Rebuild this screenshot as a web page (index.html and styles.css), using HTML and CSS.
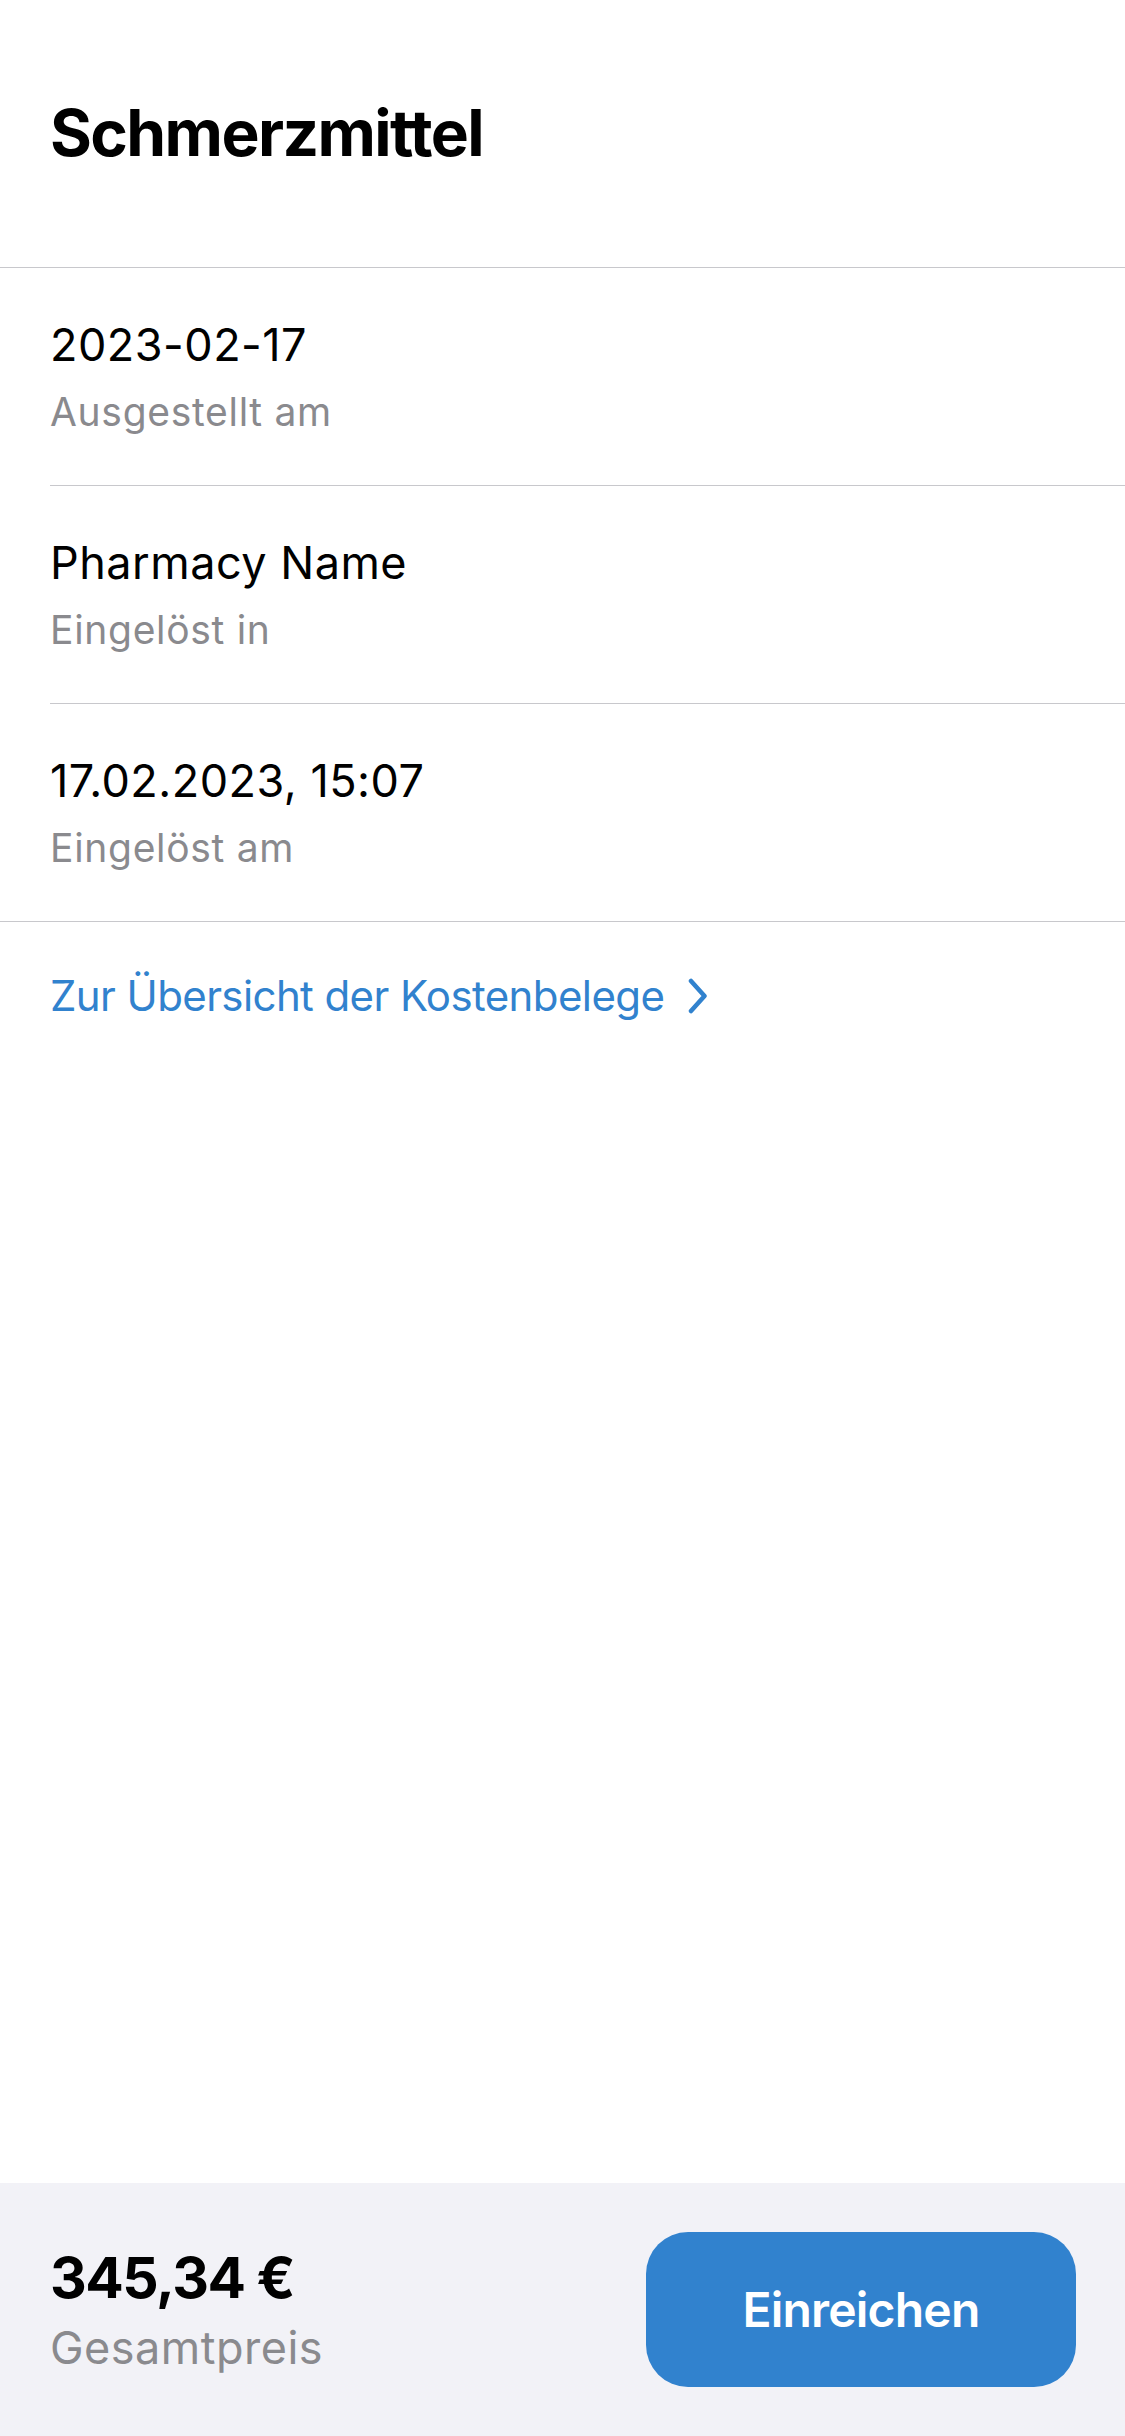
FILE: index.html
```html
<!DOCTYPE html>
<html lang="de">
<head>
<meta charset="utf-8">
<title>Schmerzmittel</title>
<link rel="stylesheet" href="styles.css">
</head>
<body>
<div class="screen">
  <header class="header">
    <h1 class="title">Schmerzmittel</h1>
  </header>
  <section class="list">
    <div class="row">
      <div class="primary">2023-02-17</div>
      <div class="secondary">Ausgestellt am</div>
    </div>
    <div class="row">
      <div class="primary">Pharmacy Name</div>
      <div class="secondary">Eingelöst in</div>
    </div>
    <div class="row last">
      <div class="primary">17.02.2023, 15:07</div>
      <div class="secondary">Eingelöst am</div>
    </div>
  </section>
  <a class="link" href="#">
    <span>Zur Übersicht der Kostenbelege</span>
    <svg class="chevron" width="22" height="36" viewBox="0 0 22 36" aria-hidden="true">
      <path d="M4 3 L17.5 18 L4 33" fill="none" stroke="currentColor" stroke-width="4.5" stroke-linecap="round" stroke-linejoin="round"/>
    </svg>
  </a>
  <main class="spacer"></main>
  <footer class="footer">
    <div class="total">
      <div class="price">345,34 €</div>
      <div class="price-label">Gesamtpreis</div>
    </div>
    <button class="submit" type="button">Einreichen</button>
  </footer>
</div>
</body>
</html>
```

FILE: styles.css
```css
html, body {
  margin: 0;
  padding: 0;
  background: #ffffff;
}

body {
  font-family: Inter, "Noto Sans", "Liberation Sans", sans-serif;
  color: #000000;
  -webkit-font-smoothing: antialiased;
}

.screen {
  width: 1125px;
  height: 2436px;
  display: flex;
  flex-direction: column;
  overflow: hidden;
}

.header {
  height: 268px;
  border-bottom: 1px solid #c8c8cc;
  padding: 93px 0 0 50px;
  box-sizing: border-box;
}

.title {
  margin: 0;
  font-size: 64px;
  line-height: 80px;
  font-weight: 700;
  letter-spacing: -1.6px;
}

.list {
  display: flex;
  flex-direction: column;
}

.row {
  margin-left: 50px;
  height: 218px;
  box-sizing: border-box;
  padding-top: 50px;
  border-bottom: 1px solid #c8c8cc;
}

.row.last {
  margin-left: 0;
  padding-left: 50px;
}

.primary {
  font-size: 45px;
  line-height: 54px;
  font-weight: 400;
  letter-spacing: 0.5px;
}

.secondary {
  margin-top: 16px;
  font-size: 39px;
  line-height: 47px;
  color: #8a8a8e;
  letter-spacing: 0.7px;
}

.link {
  display: flex;
  align-items: center;
  gap: 23px;
  padding: 48px 0 0 50px;
  color: #3182ce;
  text-decoration: none;
  font-size: 42px;
  line-height: 52px;
  letter-spacing: -0.6px;
}

.chevron {
  flex: none;
  display: block;
}

.spacer {
  flex: 1;
}

.footer {
  height: 253px;
  box-sizing: border-box;
  background: #f2f2f7;
  display: flex;
  align-items: center;
  justify-content: space-between;
  padding: 49px 49px 49px 50px;
}

.total {
  display: flex;
  flex-direction: column;
  gap: 9px;
}

.price {
  font-size: 57px;
  line-height: 68px;
  font-weight: 700;
  letter-spacing: -1.5px;
}

.price-label {
  font-size: 45px;
  line-height: 54px;
  color: #8a8a8e;
  letter-spacing: 0.5px;
}

.submit {
  width: 430px;
  height: 155px;
  border: none;
  border-radius: 42px;
  background: #3182ce;
  color: #ffffff;
  font-family: inherit;
  font-size: 48px;
  font-weight: 600;
  letter-spacing: -0.8px;
  padding: 0;
}
```
